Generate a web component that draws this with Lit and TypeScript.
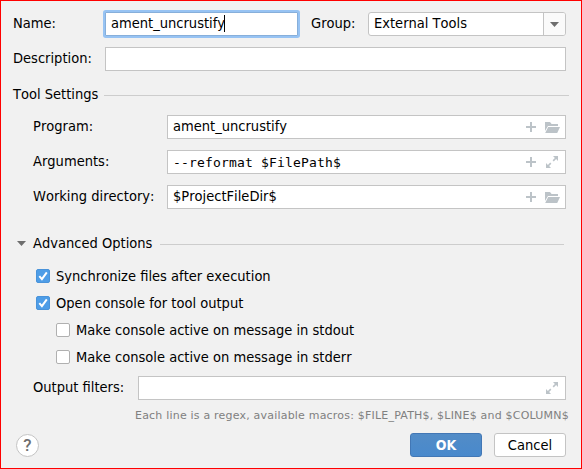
import { LitElement, html, css, svg } from "lit";
import { customElement } from "lit/decorators.js";

const plus = html`<svg class="icon" width="10" height="10" viewBox="0 0 10 10" shape-rendering="crispEdges">
  <path d="M4 0h2v4h4v2H6v4H4V6H0V4h4z" fill="#bcc3c8" /></svg>`;
const folder = html`<svg class="icon" width="15" height="12" viewBox="0 0 15 12">
  <path d="M0 10V1h5l1.6 2H13v2H3z" fill="#bcc3c8" /><path d="M3.2 6H15l-2.8 6H0.2z" fill="#bcc3c8" /></svg>`;
const expand = html`<svg class="icon" width="12" height="12" viewBox="0 0 12 12">
  <path d="M7 0h5v5l-1.9-1.9-2.3 2.3-1.2-1.2 2.3-2.3zM0 7l1.9 1.9 2.3-2.3 1.2 1.2-2.3 2.3L5 12H0z" fill="#bcc3c8" /></svg>`;
const arrow = html`<svg class="icon" width="9" height="5" viewBox="0 0 9 5"><path d="M0 0h9L4.5 5z" fill="#6e6e6e" /></svg>`;
const check = svg`<path d="M3.3 7.2l2.6 2.9 4.9-6.8" fill="none" stroke="#fff" stroke-width="2" />`;

@customElement("app-root")
export class AppRoot extends LitElement {
  static styles = css`
    :host { display: block; width: 582px; height: 469px; }
    * { box-sizing: border-box; }
    .dialog { width: 582px; height: 469px; border: 1px solid #f00; background: #f1f1f1; padding: 11px 15px 0 12px;
      display: flex; flex-direction: column; color: #000; white-space: pre; font-kerning: none;
      font: 14.54px/20px "DejaVu Sans Condensed", "DejaVu Sans", sans-serif; font-stretch: condensed; }
    .row { display: flex; align-items: center; height: 24px; flex: none; }
    .label { flex: none; line-height: 22px; height: 24px; font-kerning: none; }
    .main { width: 92px; }
    .tool { width: 134px; }
    .sub { margin-left: 20px; }
    .field { height: 24px; flex: 1; background: #fff; border: 1px solid #c4c4c4; padding: 0 5px; display: flex;
      align-items: center; line-height: 20px; min-width: 0; }
    .value { flex: 1; height: 22px; font-kerning: none; }
    .focused { flex: none; width: 193px; border-color: #87afda; box-shadow: 0 0 0 2px #97c3f3; border-radius: 1px; }
    .caret { display: inline-block; width: 1px; height: 17px; background: #000; vertical-align: top; margin: 2px 0 0 -1px; }
    .group { width: 57px; margin-left: 13px; }
    .combo { border-radius: 3px; padding-right: 0; }
    .drop { width: 22px; height: 22px; border-left: 1px solid #c4c4c4; background: #fafafa; border-radius: 0 2px 2px 0;
      display: flex; align-items: center; justify-content: center; padding-top: 1px; }
    .icon { display: block; flex: none; }
    .plus { margin-right: 9px; }
    .exp { margin-right: 2px; margin-left: 1px; }
    .mono { font-family: "DejaVu Sans Mono", monospace; font-size: 13px; font-stretch: normal; letter-spacing: .17px; line-height: 23px; }
    .line { flex: 1; height: 1px; background: #cdcdcd; }
    .title { margin-top: 12px; }
    .title .line { margin: 0 -3px 0 6px; }
    .program { margin-top: 8px; }
    .gap { margin-top: 11px; }
    .advanced { margin-top: 23px; padding-left: 4px; }
    .advanced .icon { margin-bottom: 1px; }
    .advanced .label { margin-left: 7px; }
    .advanced .line { margin: 0 2px 0 8px; }
    .option { height: 27px; padding: 0 0 1px 23px; gap: 6px; }
    .option .label { line-height: 24px; }
    .nested { padding-left: 43px; }
    .first { margin-top: 7px; }
    .box { width: 14px; height: 14px; border: 1px solid #b0b0b0; border-radius: 2px; background: #fff; display: block; flex: none; }
    .on { border-color: #4993da; background: #4e9de7; }
    .box svg { display: block; margin: -1px; }
    .output { width: 105px; }
    .filters { margin-top: 5px; }
    .hint { margin: 6px 0 0 122px; height: 20px; font: 11px/19px "DejaVu Sans", sans-serif; color: #808080; letter-spacing: .2px; }
    .footer { margin-top: 7px; }
    .help { width: 23px; height: 23px; border: 1px solid #c4c4c4; border-radius: 50%; background: #fff; margin-left: 3px;
      text-align: center; font: 500 17px/21px Roboto, sans-serif; color: #6e6e6e; }
    .space { flex: 1; }
    .button { width: 72px; height: 24px; border: 1px solid #c4c4c4; border-radius: 3px; background: #fff; text-align: center; line-height: 22px; }
    .primary { margin-right: 12px; background: linear-gradient(#528cc7, #4989cc); border-color: #4277b5; color: #fff; font-weight: bold; font-size: 14px; }
  `;

  private path(label: string, value: string, icon: unknown, cls = "gap", kind = "") {
    return html`<div class="row ${cls}">
      <div class="label tool sub">${label}</div>
      <div class="field"><div class="value ${kind}">${value}</div><div class="plus">${plus}</div><div class=${kind ? "exp" : ""}>${icon}</div></div>
    </div>`;
  }

  private option(label: string, on: boolean, cls = "") {
    return html`<div class="row option ${cls}">
      <div class="box ${on ? "on" : ""}">${on ? html`<svg width="14" height="14" viewBox="0 0 14 14">${check}</svg>` : ""}</div>
      <div class="label">${label}</div>
    </div>`;
  }

  render() {
    return html`<div class="dialog">
      <div class="row"><div class="label main">Name:</div>
        <div class="field focused"><div class="value">ament_uncrustify<span class="caret"></span></div></div>
        <div class="label group">Group:</div>
        <div class="field combo"><div class="value">External Tools</div><div class="drop">${arrow}</div></div></div>
      <div class="row gap"><div class="label main">Description:</div><div class="field"></div></div>
      <div class="row title"><div class="label">Tool Settings</div><div class="line"></div></div>
      ${this.path("Program:", "ament_uncrustify", folder, "program")}
      ${this.path("Arguments:", "--reformat $FilePath$", expand, "gap", "mono")}
      ${this.path("Working directory:", "$ProjectFileDir$", folder)}
      <div class="row advanced">${arrow}<div class="label">Advanced Options</div><div class="line"></div></div>
      ${this.option("Synchronize files after execution", true, "first")}
      ${this.option("Open console for tool output", true)}
      ${this.option("Make console active on message in stdout", false, "nested")}
      ${this.option("Make console active on message in stderr", false, "nested")}
      <div class="row filters"><div class="label output sub">Output filters:</div>
        <div class="field"><div class="value"></div><div class="exp">${expand}</div></div></div>
      <div class="hint">Each line is a regex, available macros: $FILE_PATH$, $LINE$ and $COLUMN$</div>
      <div class="row footer"><div class="help">?</div><div class="space"></div>
        <div class="button primary">OK</div><div class="button">Cancel</div></div>
    </div>`;
  }
}
